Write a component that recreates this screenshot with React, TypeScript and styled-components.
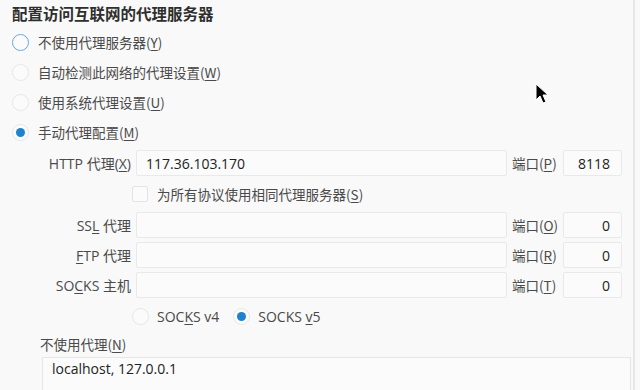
import React from 'react';
import styled, { createGlobalStyle } from 'styled-components';

const GlobalStyle = createGlobalStyle`
	html, body {
		margin: 0;
		padding: 0;
		background: #f9f9f9;
	}
	body {
		font-family: 'Open Sans', 'Noto Sans CJK SC', sans-serif;
		color: #444;
		overflow: hidden;
	}
`;

const Page = styled.div`
	position: relative;
	width: 635px;
	height: 390px;
	overflow: hidden;
	box-sizing: border-box;
	padding: 3px 0 0 12px;
	border-right: 2px solid #e6e6e6;
	font-size: 13.5px;
`;

const Title = styled.div`
	font-family: 'Noto Sans CJK SC', sans-serif;
	font-size: 15.5px;
	font-weight: 700;
	line-height: 20px;
	color: #2e2e2e;
`;

const Options = styled.div`
	display: flex;
	flex-direction: column;
	margin-top: 4px;
`;

const OptionRow = styled.label`
	display: flex;
	align-items: center;
	gap: 9px;
	height: 30px;
	color: #4a4a4a;
	font-family: 'Noto Sans CJK SC', sans-serif;
`;

const RadioDot = styled.span<{ $checked?: boolean; $focused?: boolean }>`
	position: relative;
	flex: none;
	width: 17px;
	height: 17px;
	box-sizing: border-box;
	border-radius: 50%;
	background: #fbfbfb;
	border: ${(p) => (p.$focused ? '1.5px solid #6aa6d8' : '1px solid #e7e7e7')};

	&::after {
		content: '';
		display: ${(p) => (p.$checked ? 'block' : 'none')};
		position: absolute;
		left: 50%;
		top: 50%;
		width: 9px;
		height: 9px;
		margin: -4.5px 0 0 -4.5px;
		border-radius: 50%;
		background: #1f82cc;
	}
`;

const Key = styled.u`
	text-underline-offset: 2px;
`;

const Grid = styled.div`
	display: grid;
	grid-template-columns: 91px 371px 46px 59px;
	column-gap: 5px;
	row-gap: 4px;
	align-items: center;
	margin: 3px 0 0 28px;
`;

const FieldLabel = styled.span`
	text-align: right;
	white-space: nowrap;
	color: #4a4a4a;
	font-family: 'Open Sans', 'Noto Sans CJK SC', sans-serif;
	font-size: 14px;
`;

const PortLabel = styled(FieldLabel)`
	text-align: left;
	font-size: 13.5px;
	font-family: 'Noto Sans CJK SC', sans-serif;
`;

const Field = styled.div<{ $align?: 'left' | 'right' }>`
	height: 26px;
	box-sizing: border-box;
	border: 1px solid #e9e9e9;
	border-radius: 2px;
	background: #fbfbfb;
	display: flex;
	align-items: center;
	justify-content: ${(p) => (p.$align === 'right' ? 'flex-end' : 'flex-start')};
	padding: 0 ${(p) => (p.$align === 'right' ? '11px' : '9px')};
	font-family: 'Open Sans', sans-serif;
	font-size: 14px;
	color: #222;
`;

const CheckRow = styled.div`
	grid-column: 2 / span 3;
	display: flex;
	align-items: center;
	gap: 9px;
	height: 28px;
	margin-left: -4px;
	font-family: 'Noto Sans CJK SC', sans-serif;
	color: #4a4a4a;
`;

const CheckBox = styled.span`
	width: 16px;
	height: 16px;
	box-sizing: border-box;
	border: 1px solid #e4e4e4;
	border-radius: 2px;
	background: #fbfbfb;
`;

const SocksRow = styled.div`
	grid-column: 2 / span 3;
	display: flex;
	align-items: center;
	gap: 14px;
	height: 28px;
	margin-left: -4px;
`;

const SocksOption = styled.label`
	display: flex;
	align-items: center;
	gap: 8px;
	font-family: 'Open Sans', sans-serif;
	font-size: 14px;
	color: #4a4a4a;
`;

const NoProxyLabel = styled.div`
	margin: 1px 0 0 28px;
	height: 26px;
	line-height: 26px;
	font-family: 'Noto Sans CJK SC', sans-serif;
	color: #4a4a4a;
`;

const NoProxyBox = styled.div`
	margin-left: 30px;
	width: 589px;
	height: 40px;
	box-sizing: border-box;
	border: 1px solid #e6e6e6;
	border-bottom: none;
	background: #fbfbfb;
	padding: 1px 9px;
	font-family: 'Open Sans', sans-serif;
	font-size: 14px;
	line-height: 20px;
	color: #222;
`;

const Cursor = styled.svg`
	position: absolute;
	left: 535px;
	top: 83px;
`;

type Row = {
	label: React.ReactNode;
	value: string;
	port: React.ReactNode;
	portValue: string;
};

const rows: Row[] = [
	{ label: <>HTTP 代理(<Key>X</Key>)</>, value: '117.36.103.170', port: <>端口(<Key>P</Key>)</>, portValue: '8118' },
	{ label: <>SS<Key>L</Key> 代理</>, value: '', port: <>端口(<Key>O</Key>)</>, portValue: '0' },
	{ label: <><Key>F</Key>TP 代理</>, value: '', port: <>端口(<Key>R</Key>)</>, portValue: '0' },
	{ label: <>SO<Key>C</Key>KS 主机</>, value: '', port: <>端口(<Key>T</Key>)</>, portValue: '0' },
];

const FieldRow = ({ row }: { row: Row }) => (
	<>
		<FieldLabel>{row.label}</FieldLabel>
		<Field>{row.value}</Field>
		<PortLabel>{row.port}</PortLabel>
		<Field $align='right'>{row.portValue}</Field>
	</>
);

const App = () => {
	return (
		<Page>
			<GlobalStyle />
			<Title>配置访问互联网的代理服务器</Title>
			<Options>
				<OptionRow>
					<RadioDot $focused />
					<span>不使用代理服务器(<Key>Y</Key>)</span>
				</OptionRow>
				<OptionRow>
					<RadioDot />
					<span>自动检测此网络的代理设置(<Key>W</Key>)</span>
				</OptionRow>
				<OptionRow>
					<RadioDot />
					<span>使用系统代理设置(<Key>U</Key>)</span>
				</OptionRow>
				<OptionRow>
					<RadioDot $checked />
					<span>手动代理配置(<Key>M</Key>)</span>
				</OptionRow>
			</Options>

			<Grid>
				<FieldRow row={rows[0]} />
				<span />
				<CheckRow>
					<CheckBox />
					<span>为所有协议使用相同代理服务器(<Key>S</Key>)</span>
				</CheckRow>
				{rows.slice(1).map((r, i) => (
					<FieldRow key={i} row={r} />
				))}
				<span />
				<SocksRow>
					<SocksOption>
						<RadioDot />
						<span>SOC<Key>K</Key>S v4</span>
					</SocksOption>
					<SocksOption>
						<RadioDot $checked />
						<span>SOCKS <Key>v</Key>5</span>
					</SocksOption>
				</SocksRow>
			</Grid>

			<NoProxyLabel>不使用代理(<Key>N</Key>)</NoProxyLabel>
			<NoProxyBox>localhost, 127.0.0.1</NoProxyBox>

			<Cursor width='16' height='22' viewBox='0 0 16 22'>
				<path d='M1 1 L1 17 L5 13 L8 20 L11 19 L8 12 L13 12 Z' fill='#000' stroke='#fff' strokeWidth='1' />
			</Cursor>
		</Page>
	);
};

export default App;
